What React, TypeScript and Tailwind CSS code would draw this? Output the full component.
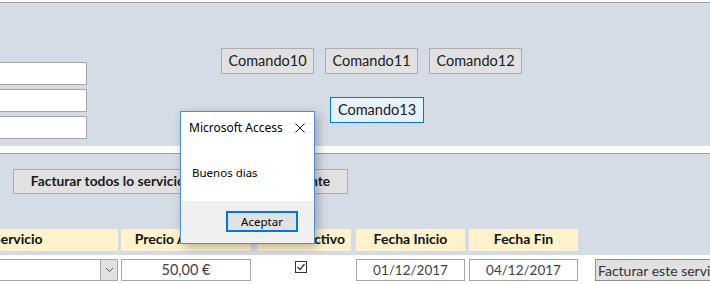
import React from "react";

function Btn({ children, className = "" }: { children: React.ReactNode; className?: string }) {
  return (
    <div
      className={
        "shrink-0 flex items-center justify-center border border-[#adadad] bg-[#e1e1e1] text-[14.5px] text-[#1a1a1a] " +
        className
      }
    >
      {children}
    </div>
  );
}

export default function App() {
  return (
    <div className="relative w-[710px] h-[284px] overflow-hidden bg-white font-['Lato','Open_Sans',sans-serif]">
      <div className="h-[2px] bg-white" />
      <div className="h-px bg-[#a0a0a0]" />
      {/* Header section */}
      <div className="h-[143px] bg-[#d6dce5] flex">
        <div className="shrink-0 w-[87px] pt-[59px] flex flex-col gap-[4px]">
          <div className="h-[23px] bg-white border border-l-0 border-[#a6a6a6]" />
          <div className="h-[23px] bg-white border border-l-0 border-[#a6a6a6]" />
          <div className="h-[23px] bg-white border border-l-0 border-[#a6a6a6]" />
        </div>
        <div className="shrink-0 ml-[134px] pt-[45px] flex flex-col">
          <div className="flex gap-[11px]">
            <Btn className="w-[93px] h-[26px]">Comando10</Btn>
            <Btn className="w-[93px] h-[26px]">Comando11</Btn>
            <Btn className="w-[93px] h-[26px]">Comando12</Btn>
          </div>
          <div className="ml-[109px] mt-[23px] w-[94px] h-[26px] flex items-center justify-center border border-[#0078d7] bg-[#e5f1fb] text-[14.5px] text-[#1a1a1a]">
            Comando13
          </div>
        </div>
      </div>
      <div className="h-[7px] bg-white" />
      <div className="h-px bg-[#a0a0a0]" />
      {/* Second section */}
      <div className="h-[101px] bg-[#d6dce5] flex flex-col">
        <div className="ml-[13px] mt-[15px] w-[335px] h-[25px] flex items-center justify-center border border-[#adadad] bg-[#e1e1e1] text-[13.8px] font-bold text-[#1a1a1a] whitespace-nowrap overflow-hidden">
          Facturar todos lo servicios activos de este cliente
        </div>
        <div className="mt-[35px] flex h-[22px] text-[14px] leading-[17px] font-bold text-[#111]">
          <div className="shrink-0 w-[118px] bg-[#fff2cc] flex items-center pb-[4px] overflow-hidden">
            <span className="ml-[-7px] whitespace-nowrap">Servicio</span>
          </div>
          <div className="shrink-0 ml-[3px] w-[130px] bg-[#fff2cc] flex items-center pb-[4px] justify-center whitespace-nowrap">
            Precio Acordado
          </div>
          <div className="shrink-0 ml-[6px] w-[94px] bg-[#fff2cc] flex items-center pb-[4px] justify-end pr-[6px] whitespace-nowrap">
            Activo
          </div>
          <div className="shrink-0 ml-[5px] w-[109px] bg-[#fff2cc] flex items-center pb-[4px] justify-center whitespace-nowrap">
            Fecha Inicio
          </div>
          <div className="shrink-0 ml-[4px] w-[109px] bg-[#fff2cc] flex items-center pb-[4px] justify-center whitespace-nowrap">
            Fecha Fin
          </div>
        </div>
      </div>
      {/* Detail row */}
      <div className="pt-[4px] flex items-start text-[14.5px] text-[#3f3f3f]">
        <div className="shrink-0 w-[118px] h-[22px] border border-l-0 border-[#a6a6a6] bg-white flex justify-end">
          <div className="w-[17px] h-full bg-[#e1e1e1] border-l border-[#a6a6a6] flex items-center justify-center">
            <svg width="9" height="6" viewBox="0 0 9 6">
              <path d="M1 1 L4.5 4.5 L8 1" fill="none" stroke="#555" strokeWidth="1" />
            </svg>
          </div>
        </div>
        <div className="shrink-0 ml-[3px] w-[130px] h-[22px] border border-[#a6a6a6] flex items-center justify-center">
          50,00 €
        </div>
        <div className="shrink-0 ml-[44px] mt-[2px] w-[12px] h-[12px] border border-[#333] bg-white flex items-center justify-center">
          <svg width="10" height="10" viewBox="0 0 10 10">
            <path d="M1.5 5 L4 7.5 L8.5 2" fill="none" stroke="#333" strokeWidth="1.2" />
          </svg>
        </div>
        <div className="shrink-0 ml-[49px] w-[109px] h-[22px] border border-[#a6a6a6] flex items-center justify-center text-[13.5px]">
          01/12/2017
        </div>
        <div className="shrink-0 ml-[4px] w-[109px] h-[22px] border border-[#a6a6a6] flex items-center justify-center text-[13.5px]">
          04/12/2017
        </div>
        <div className="shrink-0 ml-[17px] w-[140px] h-[22px] border border-[#8f8f8f] bg-[#e1e1e1] flex items-center pl-[2px] whitespace-nowrap text-[14px] text-[#333]">
          Facturar este servicio
        </div>
      </div>

      {/* Dialog overlay */}
      <div className="absolute z-10 left-[180px] top-[111px] w-[135px] h-[133px] border border-[#4a8fd4] bg-white flex flex-col shadow-[3px_3px_10px_rgba(0,0,0,0.28)] font-['Noto_Sans','Open_Sans',sans-serif] text-[12px] text-black">
        <div className="h-[31px] shrink-0 flex items-center justify-between pl-[8px] pr-[9px]">
          <span className="text-[12px]">Microsoft Access</span>
          <svg width="10" height="10" viewBox="0 0 10 10">
            <path d="M0.5 0.5 L9.5 9.5 M9.5 0.5 L0.5 9.5" stroke="#111" strokeWidth="1" />
          </svg>
        </div>
        <div className="h-[58px] shrink-0 pl-[11px] pt-[21px] text-[11.5px]">Buenos dias</div>
        <div className="flex-1 bg-[#f0f0f0] flex justify-end pr-[16px] pt-[10px]">
          <div className="w-[72px] h-[21px] border-2 border-[#0078d7] bg-[#e1e1e1] flex items-center justify-center text-[11.5px]">
            Aceptar
          </div>
        </div>
      </div>
    </div>
  );
}
